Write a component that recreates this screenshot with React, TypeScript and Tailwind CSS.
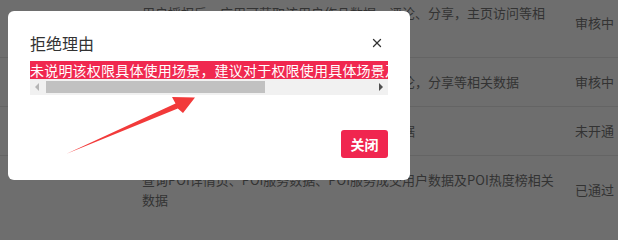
import { X } from "lucide-react";

const rows = [
  { lines: ["用户授权后，应用可获取该用户作品数据、评论、分享，主页访问等相", "关数据"], status: "审核中" },
  { lines: ["用户授权后，应用可获取该用户视频点赞、评论，分享等相关数据"], status: "审核中" },
  { lines: ["获取用户的抖音账号粉丝、关注列表等相关数据"], status: "未开通" },
  { lines: ["查询POI详情页、POI服务数据、POI服务成交用户数据及POI热度榜相关", "数据"], status: "已通过" },
];

const reason = "未说明该权限具体使用场景，建议对于权限使用具体场景及使用方式进行详细说明后重新提交申请";

export default function App() {
  return (
    <div className="relative h-[215px] w-full overflow-hidden bg-white font-['Noto_Sans_CJK_SC',sans-serif]">
      {/* 背景表格 */}
      <div className="-mt-[11px] text-[13px] leading-5 text-[#777]">
        {rows.map((r, i) => (
          <div key={i} className="grid grid-cols-[142px_433px_1fr] items-center border-b border-[#e8e8e8] py-[14px]">
            <div />
            <div className="whitespace-nowrap">
              {r.lines.map((l) => (
                <div key={l}>{l}</div>
              ))}
            </div>
            <div>{r.status}</div>
          </div>
        ))}
      </div>

      {/* 遮罩 */}
      <div className="fixed inset-0 bg-black/[0.57]" />

      {/* 弹窗 */}
      <div className="absolute left-[8px] top-[11px] w-[402px] rounded-[6px] bg-white px-[22px] pb-[22px] pt-[20px]">
        <div className="flex h-6 items-center justify-between">
          <h2 className="text-[16px] text-[#333]">拒绝理由</h2>
          <X className="mr-[4px] h-[14px] w-[14px] text-[#333]" strokeWidth={2.2} />
        </div>

        <div className="mt-[6px] overflow-hidden">
          <div className="h-[18px] whitespace-nowrap bg-[#f0284f] text-[14px] leading-[18px] tracking-[0.2px] text-white">
            {reason}
          </div>
          {/* 横向滚动条 */}
          <div className="flex h-4 items-center bg-[#f1f1f1]">
            <span className="ml-[5px] h-0 w-0 border-y-[4px] border-r-[4px] border-y-transparent border-r-[#b5b5b5]" />
            <span className="ml-[7px] h-3 w-[219px] bg-[#c1c1c1]" />
            <span className="ml-auto mr-[5px] h-0 w-0 border-y-[4px] border-l-[4px] border-y-transparent border-l-[#505050]" />
          </div>
        </div>

        <div className="mt-[35px] flex justify-end">
          <button className="h-7 w-[47px] rounded-[3px] bg-[#f0264f] text-[14px] font-bold text-white">关闭</button>
        </div>
      </div>

      {/* 标注箭头 */}
      <svg className="pointer-events-none absolute left-0 top-0" width="618" height="215" viewBox="0 0 618 215">
        <polygon points="66,154 175.5,103.5 172,97 195,97.5 183,113 177.8,108.4" fill="#f23a3a" />
      </svg>
    </div>
  );
}
